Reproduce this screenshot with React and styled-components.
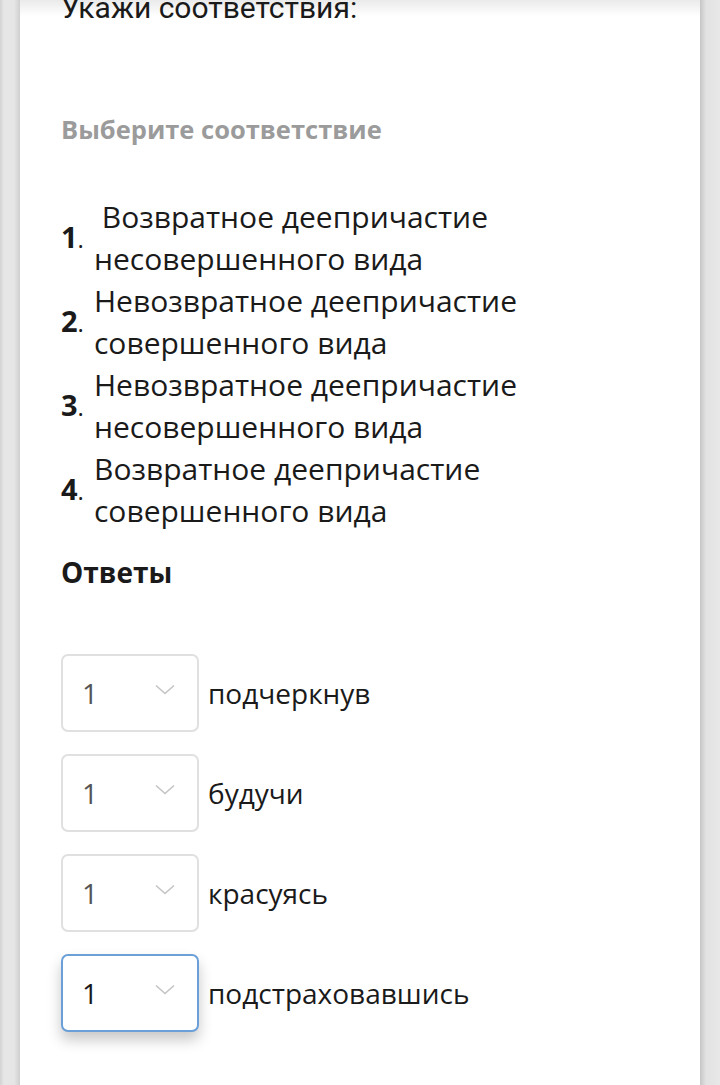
import React from "react";
import styled, { createGlobalStyle } from "styled-components";

const Global = createGlobalStyle`
  html, body { margin: 0; padding: 0; }
  body {
    background: #e4e4e4;
    font-family: "Open Sans", "Noto Sans", sans-serif;
    color: #1a1a1a;
    overflow: hidden;
  }
`;

const Page = styled.div`
  height: 1085px;
  padding: 0 20px;
  box-sizing: border-box;
  background: linear-gradient(90deg, #d2d2d2 0, #e6e6e6 4px, #e6e6e6 14px, #cfcfcf 20px, transparent 20px, transparent 700px, #c6c6c6 700px, #e2e2e2 706px, #e8e8e8 720px);
`;

const Card = styled.div`
  height: 100%;
  background: linear-gradient(#eaeaea 0, #ffffff 16px);
  padding: 0 41px;
  box-sizing: border-box;
  overflow: hidden;
`;

const Heading = styled.h1`
  margin: -12px 0 0;
  font-family: Roboto, "Open Sans", sans-serif;
  font-weight: 400;
  font-size: 30px;
  line-height: 40px;
  color: #1a1a1a;
`;

const Hint = styled.div`
  margin-top: 84px;
  font-weight: 700;
  font-size: 25.5px;
  line-height: 34px;
  color: #9b9b9b;
`;

const List = styled.div`
  margin-top: 50px;
  display: flex;
  flex-direction: column;
`;

const Item = styled.div`
  display: flex;
  align-items: center;
`;

const Num = styled.span`
  width: 33px;
  flex: none;
  font-size: 29px;
  line-height: 42px;
  font-weight: 700;
  & > i { font-style: normal; font-weight: 400; font-size: 24px; }
`;

const ItemText = styled.div`
  font-size: 30px;
  line-height: 42px;
  white-space: pre-wrap;
`;

const Answers = styled.div`
  margin-top: 21px;
  font-weight: 700;
  font-size: 28px;
  line-height: 38px;
`;

const Rows = styled.div`
  margin-top: 63px;
  display: flex;
  flex-direction: column;
  gap: 22px;
`;

const Row = styled.div`
  display: flex;
  align-items: center;
  gap: 9px;
`;

const Select = styled.div`
  width: 138px;
  height: 78px;
  box-sizing: border-box;
  border-radius: 7px;
  border: 2px solid ${(p) => (p.$focused ? "#6a9fd8" : "#e0e0e0")};
  box-shadow: ${(p) => (p.$focused ? "0 8px 14px rgba(0,0,0,0.22)" : "none")};
  background: #fff;
  display: flex;
  align-items: center;
  justify-content: space-between;
  padding: 0 22px 0 19px;
`;

const SelectValue = styled.span`
  font-size: 28px;
  color: ${(p) => (p.$focused ? "#1a1a1a" : "#555")};
`;

const Label = styled.span`
  font-size: 28px;
`;

const Chevron = () => (
  <svg width="20" height="12" viewBox="0 0 20 12" fill="none" style={{ marginTop: -6 }}>
    <path d="M1 1.5 L10 9.5 L19 1.5" stroke="#c4c4c4" strokeWidth="1.6" />
  </svg>
);

const items = [
  { n: "1", t: " Возвратное деепричастие\nнесовершенного вида" },
  { n: "2", t: "Невозвратное деепричастие\nсовершенного вида" },
  { n: "3", t: "Невозвратное деепричастие\nнесовершенного вида" },
  { n: "4", t: "Возвратное деепричастие\nсовершенного вида" },
];

const answers = ["подчеркнув", "будучи", "красуясь", "подстраховавшись"];

export default function App() {
  return (
    <>
      <Global />
      <Page>
        <Card>
          <Heading>Укажи соответствия:</Heading>
          <Hint>Выберите соответствие</Hint>
          <List>
            {items.map((it) => (
              <Item key={it.n}>
                <Num>
                  {it.n}
                  <i>.</i>
                </Num>
                <ItemText>{it.t}</ItemText>
              </Item>
            ))}
          </List>
          <Answers>Ответы</Answers>
          <Rows>
            {answers.map((a, i) => (
              <Row key={a}>
                <Select $focused={i === 3}>
                  <SelectValue $focused={i === 3}>1</SelectValue>
                  <Chevron />
                </Select>
                <Label>{a}</Label>
              </Row>
            ))}
          </Rows>
        </Card>
      </Page>
    </>
  );
}
